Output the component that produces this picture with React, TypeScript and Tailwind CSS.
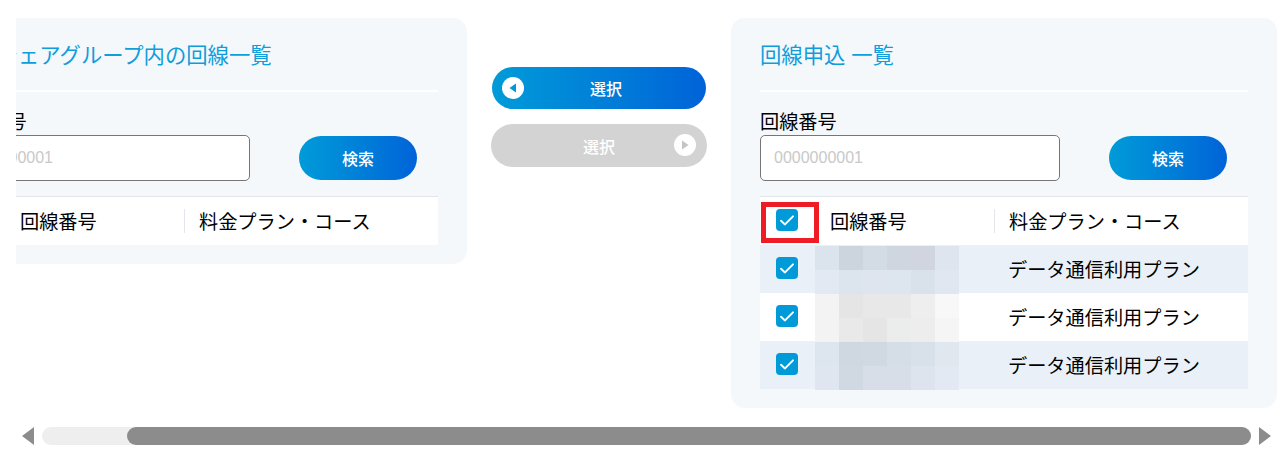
const FONT = "font-['Liberation_Sans','Noto_Sans_CJK_JP',sans-serif]";
const GRAD = "bg-gradient-to-r from-[#009bd8] to-[#0063d8]";

function Check() {
  return (
    <div className="flex h-[22px] w-[22px] items-center justify-center rounded-[4px] bg-[#009ad9]">
      <svg width="16" height="13" viewBox="0 0 16 13" fill="none">
        <path d="M2 6.8 L6 10.4 L14 2.4" stroke="#fff" strokeWidth="2" strokeLinecap="round" strokeLinejoin="round" />
      </svg>
    </div>
  );
}

const Sep = () => <span className="h-6 w-px bg-[#e3e6ea]" />;

function HeaderRow({ check }: { check?: boolean }) {
  return (
    <div className="relative flex h-[49px] items-center border-t border-[#e2e6ea] bg-white text-[19.2px] text-black">
      <div className="flex w-[55px] shrink-0 justify-center pb-[2px] pr-[2px]">{check ? <Check /> : null}</div>
      <div className="w-[179px] shrink-0 pl-[15px] pt-1">回線番号</div>
      <Sep />
      <div className="pl-[14px] pt-1">料金プラン・コース</div>
    </div>
  );
}

function Blur({ colors }: { colors: string[] }) {
  return (
    <div className="grid h-[48px] w-[144px] translate-y-px grid-cols-6 grid-rows-2">
      {colors.map((c, i) => (
        <div key={i} style={{ backgroundColor: c }} />
      ))}
    </div>
  );
}

function Row({ alt, colors }: { alt: boolean; colors: string[] }) {
  return (
    <div className={`flex h-12 items-center text-[19.2px] text-black ${alt ? "bg-[#e9f0f7]" : "bg-white"}`}>
      <div className="flex w-[55px] shrink-0 justify-center pb-[2px] pr-[2px]">
        <Check />
      </div>
      <div className="w-[179px] shrink-0">
        <Blur colors={colors} />
      </div>
      <div className="w-px" />
      <div className="pl-[13px] pt-1">データ通信利用プラン</div>
    </div>
  );
}

function Panel({ title, indent, children }: { title: string; indent?: boolean; children?: React.ReactNode }) {
  return (
    <section className="w-[546px] shrink-0 self-start rounded-[14px] bg-[#f5f8fb] px-[29px] pb-[19px] pt-[23px]">
      <h2 className={`h-[51px] whitespace-nowrap border-b-2 border-white text-[21.33px] font-normal leading-[30px] text-[#0f9ddb] ${indent ? "pl-1" : ""}`}>{title}</h2>
      <div className="pt-[18px] text-[19.2px] leading-[25px] text-black">回線番号</div>
      <div className="flex items-center pb-[15px]">
        <div className="flex h-[46px] w-[300px] items-center rounded-[5px] border border-[#767676] bg-white pl-[13px] text-[16px] text-[#c9c9c9]">0000000001</div>
        <button className={`ml-[49px] h-11 w-[118px] rounded-full pt-1 text-[16px] font-medium text-white ${GRAD}`}>検索</button>
      </div>
      <HeaderRow check />
      {children}
    </section>
  );
}

const R1 = ["#dbe3ec", "#ccd5de", "#d3dbe4", "#d0d6e0", "#d0d5df", "#dfe5ee", "#e2e9f2", "#dce4ed", "#dee5ee", "#dde5ee", "#d9e1ea", "#e1e7f0"];
const R2 = ["#f3f3f3", "#e5e5e5", "#e8e8e8", "#e8e8e8", "#eeeeee", "#f8f8f8", "#f3f3f3", "#e9e9e9", "#e5e5e5", "#ebecec", "#ededed", "#f5f5f5"];
const R3 = ["#dde5ee", "#cfd8e1", "#d0d9e2", "#d5dde6", "#d8e0e9", "#e0e7ef", "#dfe6ef", "#d0d9e1", "#d7dee7", "#d7dee7", "#dde4ed", "#e3e9f2"];

export default function App() {
  return (
    <div className={`relative h-[454px] w-[1284px] overflow-hidden bg-white ${FONT}`}>
      <div className="ml-4 h-[420px] w-[1268px] overflow-hidden pt-[18px]">
        <div className="ml-[-95px] flex w-[1360px] items-start">
          <Panel title="回線シェアグループ内の回線一覧" indent />
          <div className="flex w-[264px] shrink-0 flex-col items-center gap-[15px] pt-[49px]">
            <button className={`relative h-[42px] w-[214px] rounded-full pl-[14px] pt-1 text-[16px] font-medium text-white ${GRAD}`}>
              <span className="absolute left-[10px] top-[10px] flex h-[22px] w-[22px] items-center justify-center rounded-full bg-white">
                <svg width="8" height="10" viewBox="0 0 8 10"><path d="M7 0.5 V9.5 L0.5 5 Z" fill="#0098da" /></svg>
              </span>
              選択
            </button>
            <button className="relative h-[43px] w-[216px] rounded-full bg-[#d3d3d3] pt-1 text-[16px] font-medium text-white">
              <span className="absolute right-[11px] top-[10px] flex h-[22px] w-[22px] items-center justify-center rounded-full bg-white">
                <svg width="8" height="10" viewBox="0 0 8 10"><path d="M1 0.5 V9.5 L7.5 5 Z" fill="#c4c4c4" /></svg>
              </span>
              選択
            </button>
          </div>
          <Panel title="回線申込 一覧">
            <Row alt colors={R1} />
            <Row alt={false} colors={R2} />
            <Row alt colors={R3} />
          </Panel>
        </div>
      </div>

      <div className="pointer-events-none absolute left-[761px] top-[202px] h-[41px] w-[58px] border-[5px] border-[#ee1c25]" />

      <div className="mt-[7px] flex h-[18px] items-center pl-[22px]">
        <svg width="12" height="18" viewBox="0 0 12 18" className="shrink-0"><path d="M12 0 V18 L0 9 Z" fill="#8c8c8c" /></svg>
        <div className="ml-2 h-[18px] w-[1209px] shrink-0 rounded-full bg-[#eeeeee] pl-[85px]">
          <div className="h-full rounded-full bg-[#8c8c8c]" />
        </div>
        <svg width="12" height="18" viewBox="0 0 12 18" className="ml-2 shrink-0"><path d="M0 0 V18 L12 9 Z" fill="#8c8c8c" /></svg>
      </div>
    </div>
  );
}
